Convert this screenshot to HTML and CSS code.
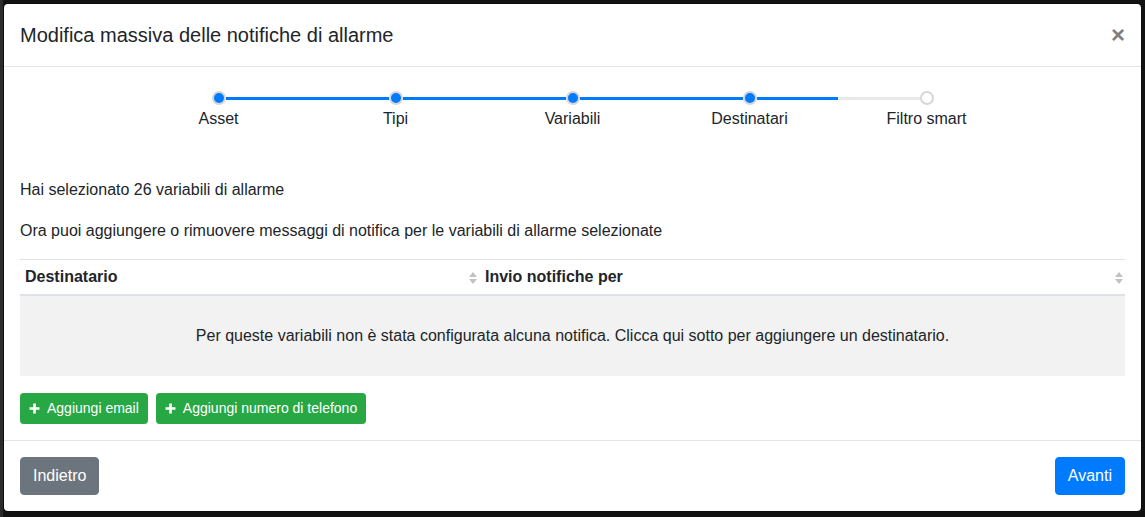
FILE: index.html
```html
<!DOCTYPE html>
<html lang="it">
<head>
<meta charset="utf-8">
<title>Modifica massiva delle notifiche di allarme</title>
<link rel="stylesheet" href="styles.css">
</head>
<body>
<div class="backdrop">
  <div class="modal">
    <div class="modal-header">
      <h5 class="modal-title">Modifica massiva delle notifiche di allarme</h5>
      <button class="close" type="button">&times;</button>
    </div>
    <div class="modal-body">
      <div class="stepper">
        <div class="step done">
          <div class="track"><span class="half none"></span><span class="dot"></span><span class="half blue"></span></div>
          <div class="label">Asset</div>
        </div>
        <div class="step done">
          <div class="track"><span class="half blue"></span><span class="dot"></span><span class="half blue"></span></div>
          <div class="label">Tipi</div>
        </div>
        <div class="step done">
          <div class="track"><span class="half blue"></span><span class="dot"></span><span class="half blue"></span></div>
          <div class="label">Variabili</div>
        </div>
        <div class="step done">
          <div class="track"><span class="half blue"></span><span class="dot"></span><span class="half blue"></span></div>
          <div class="label">Destinatari</div>
        </div>
        <div class="step">
          <div class="track"><span class="half grey"></span><span class="dot"></span><span class="half none"></span></div>
          <div class="label">Filtro smart</div>
        </div>
      </div>
      <p class="info">Hai selezionato 26 variabili di allarme</p>
      <p class="info last">Ora puoi aggiungere o rimuovere messaggi di notifica per le variabili di allarme selezionate</p>
      <table class="table">
        <thead>
          <tr>
            <th class="col-a"><span>Destinatario</span><span class="sort"><i class="up"></i><i class="down"></i></span></th>
            <th class="col-b"><span>Invio notifiche per</span><span class="sort"><i class="up"></i><i class="down"></i></span></th>
          </tr>
        </thead>
        <tbody>
          <tr>
            <td colspan="2" class="empty">Per queste variabili non è stata configurata alcuna notifica. Clicca qui sotto per aggiungere un destinatario.</td>
          </tr>
        </tbody>
      </table>
      <div class="actions">
        <button class="btn btn-sm btn-success" type="button"><svg class="plus" viewBox="0 0 11 11" width="11" height="11"><path d="M5.5 0.5V10.5M0.5 5.5H10.5" stroke="#fff" stroke-width="2.6"/></svg>Aggiungi email</button>
        <button class="btn btn-sm btn-success" type="button"><svg class="plus" viewBox="0 0 11 11" width="11" height="11"><path d="M5.5 0.5V10.5M0.5 5.5H10.5" stroke="#fff" stroke-width="2.6"/></svg>Aggiungi numero di telefono</button>
      </div>
    </div>
    <div class="modal-footer">
      <button class="btn btn-secondary" type="button">Indietro</button>
      <button class="btn btn-primary" type="button">Avanti</button>
    </div>
  </div>
</div>
</body>
</html>
```

FILE: styles.css
```css
html, body {
  margin: 0;
  padding: 0;
  background: #121212;
}
body {
  font-family: "Liberation Sans", Arial, sans-serif;
  font-size: 16px;
  line-height: 1.5;
  color: #212529;
}
.backdrop {
  padding: 3px 3px 4px 3px;
  box-sizing: border-box;
  height: 517px;
  background: linear-gradient(to right, #2a2b2d 0, #2a2b2d 3px, #121212 3px);
}
.modal {
  width: 1139px;
  background: #fff;
  border: 1px solid rgba(0, 0, 0, .2);
  background-clip: padding-box;
  border-radius: 4.8px;
  overflow: hidden;
  box-sizing: border-box;
}
.modal-header {
  display: flex;
  align-items: flex-start;
  padding: 16px;
  border-bottom: 1px solid #e3e3e8;
}
.modal-title {
  margin: 0;
  font-size: 20px;
  font-weight: 400;
  line-height: 30px;
  color: #212529;
}
.close {
  margin: -16px -16px -16px auto;
  padding: 16px;
  background: transparent;
  border: 0;
  font-family: "Liberation Sans", Arial, sans-serif;
  font-size: 24px;
  font-weight: 700;
  line-height: 30px;
  color: #000;
  opacity: .5;
  text-shadow: 0 1px 0 #fff;
}
.modal-body {
  padding: 16px;
}
.stepper {
  display: flex;
  justify-content: center;
  margin: 8px 0 47px;
}
.step {
  width: 177px;
  display: flex;
  flex-direction: column;
  align-items: center;
}
.track {
  display: flex;
  align-items: center;
  width: 100%;
  height: 14px;
}
.half {
  flex: 1;
  height: 3px;
}
.half.blue { background: #007bff; }
.half.grey { background: #e9e9ec; }
.half.none { background: transparent; }
.dot {
  width: 14px;
  height: 14px;
  box-sizing: border-box;
  border-radius: 50%;
  border: 2px solid #d6d6d6;
  background: #fff;
  flex: none;
}
.step.done .dot {
  background: #007bff;
}
.label {
  margin-top: 2px;
  line-height: 24px;
  color: #212529;
}
.info {
  margin: 0 0 17px;
}
.info.last {
  margin-bottom: 16px;
}
.table {
  width: 100%;
  border-collapse: collapse;
  margin-bottom: 17px;
}
.table th {
  text-align: left;
  font-weight: 700;
  padding: 5px;
  line-height: 24px;
  border-top: 1px solid #dee2e6;
  border-bottom: 2px solid #dee2e6;
  position: relative;
}
.col-a {
  width: 450px;
}
.sort {
  position: absolute;
  right: 3px;
  top: 12px;
  display: flex;
  flex-direction: column;
  gap: 2px;
}
.col-b .sort {
  right: 2px;
}
.sort i {
  display: block;
  width: 0;
  height: 0;
  border-left: 4px solid transparent;
  border-right: 4px solid transparent;
}
.sort .up {
  border-bottom: 5px solid #c2c2c2;
}
.sort .down {
  border-top: 5px solid #c2c2c2;
}
.table td.empty {
  background: #f2f2f2;
  text-align: center;
  padding: 28px 5px;
  line-height: 24px;
}
.actions {
  display: flex;
  gap: 8px;
}
.btn {
  font-family: "Liberation Sans", Arial, sans-serif;
  border: 1px solid transparent;
  color: #fff;
  font-size: 16px;
  line-height: 24px;
  padding: 6px 12px;
  border-radius: 4px;
}
.btn-sm {
  font-size: 14px;
  line-height: 21px;
  padding: 4px 8px;
  border-radius: 3.2px;
  display: flex;
  align-items: center;
}
.plus {
  margin: 0 7px 0 0;
}
.btn-success {
  background: #28a745;
  border-color: #28a745;
}
.btn-secondary {
  background: #6c757d;
  border-color: #6c757d;
}
.btn-primary {
  background: #007bff;
  border-color: #007bff;
}
.modal-footer {
  display: flex;
  justify-content: space-between;
  padding: 16px;
  border-top: 1px solid #e3e3e8;
}
```
